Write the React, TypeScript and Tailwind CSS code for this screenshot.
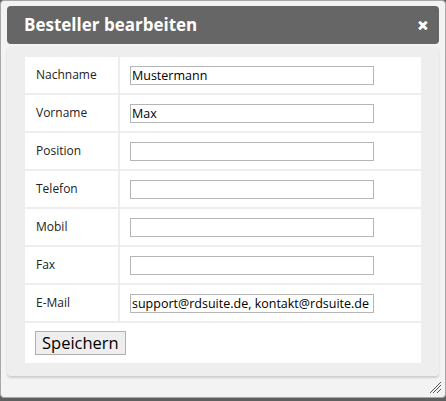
import React from "react";

const rows: { label: string; value: string }[] = [
  { label: "Nachname", value: "Mustermann" },
  { label: "Vorname", value: "Max" },
  { label: "Position", value: "" },
  { label: "Telefon", value: "" },
  { label: "Mobil", value: "" },
  { label: "Fax", value: "" },
  { label: "E-Mail", value: "support@rdsuite.de, kontakt@rdsuite.de" },
];

export default function App() {
  return (
    <div className="h-[401px] w-[446px] bg-[#5f5f5f] font-['Open_Sans',sans-serif]">
      <div className="relative flex h-[398px] w-[446px] flex-col rounded-[4px] border border-[#a8a8a8] bg-[#f3f3f3] px-[6px] pt-[5px]">
        {/* title bar */}
        <div className="flex h-[38px] items-center justify-between rounded-[4px] bg-[#666666] pl-[17px] pr-[10px]">
          <span className="text-[17px] font-bold text-white">Besteller bearbeiten</span>
          <span className="text-[21px] font-extrabold leading-none text-white">×</span>
        </div>

        {/* content */}
        <div className="mt-[2px] h-[330px] rounded-[4px] bg-[#eeeeee] px-[18px] pt-[11px] shadow-[0_2px_2px_rgba(0,0,0,0.15)]">
          <div className="flex flex-col gap-[2px] bg-[#eeeeee]">
            {rows.map((r) => (
              <div key={r.label} className="flex h-[36px] gap-[2px]">
                <div className="flex w-[93px] items-center bg-white pl-[11px] text-[12px] text-[#222]">
                  {r.label}
                </div>
                <div className="flex flex-1 items-center bg-white pl-[10px]">
                  <input
                    readOnly
                    value={r.value}
                    className="h-[19px] w-[244px] border border-[#b5b5b5] bg-white px-[1px] text-[12.5px] text-black outline-none"
                  />
                </div>
              </div>
            ))}
            <div className="flex h-[40px] items-center bg-white pl-[10px]">
              <button className="h-[24px] border border-[#b0b0b0] bg-[#eeeeee] px-[6px] text-[16.5px] leading-none text-black">
                Speichern
              </button>
            </div>
          </div>
        </div>

        {/* resize handle */}
        <svg className="absolute bottom-[3px] right-[3px]" width="12" height="12" viewBox="0 0 12 12">
          <path d="M11 3 L3 11 M11 7 L7 11 M11 0 L0 11" stroke="#555" strokeWidth="1" />
        </svg>
      </div>
    </div>
  );
}
